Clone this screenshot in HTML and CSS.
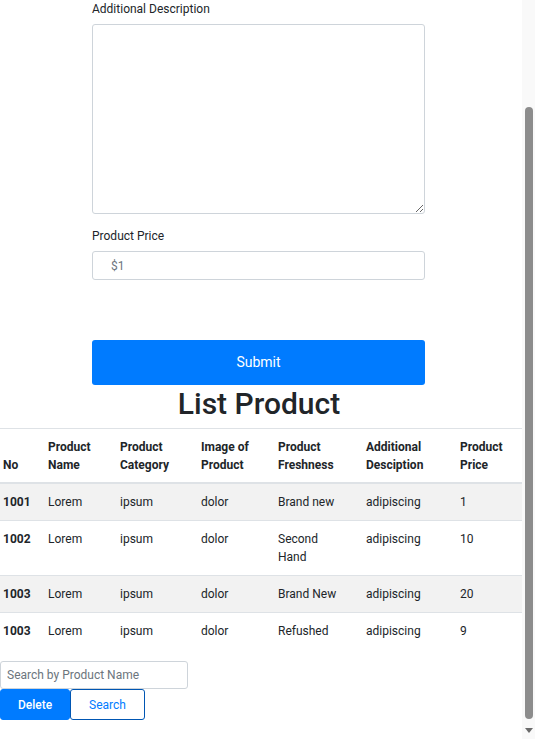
FILE: index.html
```html
<!DOCTYPE html>
<html>
<head>
<meta charset="utf-8">
<link rel="stylesheet" href="styles.css">
</head>
<body>
<div class="layout">
  <main class="page">
    <form class="product-form">
      <label class="field-label">Additional Description</label>
      <textarea class="field-textarea"></textarea>
      <label class="field-label price-label">Product Price</label>
      <input class="field-input" type="text" placeholder="$1">
      <button type="button" class="btn-submit">Submit</button>
    </form>
    <h1 class="list-title">List Product</h1>
    <table class="product-table">
      <colgroup>
        <col class="c1"><col class="c2"><col class="c3"><col class="c4"><col class="c5"><col class="c6"><col class="c7">
      </colgroup>
      <thead>
        <tr>
          <th>No</th>
          <th>Product Name</th>
          <th>Product Category</th>
          <th>Image of Product</th>
          <th>Product Freshness</th>
          <th>Additional Desciption</th>
          <th>Product Price</th>
        </tr>
      </thead>
      <tbody>
        <tr class="striped">
          <td class="num">1001</td><td>Lorem</td><td>ipsum</td><td>dolor</td><td class="fresh">Brand new</td><td>adipiscing</td><td>1</td>
        </tr>
        <tr>
          <td class="num">1002</td><td>Lorem</td><td>ipsum</td><td>dolor</td><td class="fresh">Second Hand</td><td>adipiscing</td><td>10</td>
        </tr>
        <tr class="striped">
          <td class="num">1003</td><td>Lorem</td><td>ipsum</td><td>dolor</td><td class="fresh">Brand New</td><td>adipiscing</td><td>20</td>
        </tr>
        <tr>
          <td class="num">1003</td><td>Lorem</td><td>ipsum</td><td>dolor</td><td class="fresh">Refushed</td><td>adipiscing</td><td>9</td>
        </tr>
      </tbody>
    </table>
    <div class="search-area">
      <input class="search-input" type="text" placeholder="Search by Product Name">
      <div class="search-buttons">
        <button type="button" class="btn-delete">Delete</button>
        <button type="button" class="btn-search">Search</button>
      </div>
    </div>
  </main>
  <div class="scrollbar">
    <div class="thumb"></div>
    <div class="arrow-down"></div>
  </div>
</div>
</body>
</html>
```

FILE: styles.css
```css
* { box-sizing: border-box; }
html, body {
  margin: 0;
  padding: 0;
  height: 739px;
  overflow: hidden;
  background: #fff;
}
body {
  font-family: Roboto, "Liberation Sans", sans-serif;
  color: #212529;
  font-size: 12px;
}
.layout {
  display: flex;
  height: 739px;
}
.page {
  flex: 1;
  min-width: 0;
}
.product-form {
  display: flex;
  flex-direction: column;
  width: 333px;
  margin-left: 92px;
}
.field-label {
  display: block;
  font-size: 12px;
  line-height: 16px;
  padding-top: 1px;
  margin-bottom: 7px;
  color: #212529;
}
.price-label {
  margin-top: 13px;
  margin-bottom: 7px;
}
.field-textarea {
  width: 333px;
  height: 190px;
  border: 1px solid #ced4da;
  border-radius: 3px;
  margin: 0;
  font-family: inherit;
}
.field-input {
  width: 333px;
  height: 29px;
  border: 1px solid #ced4da;
  border-radius: 3px;
  padding: 0 0 0 18px;
  margin: 0;
  font-family: inherit;
  font-size: 12px;
}
.field-input::placeholder,
.search-input::placeholder {
  color: #6c757d;
  opacity: 1;
}
.btn-submit {
  margin-top: 60px;
  height: 45px;
  width: 333px;
  background: #007bff;
  color: #fff;
  border: none;
  border-radius: 3px;
  font-family: inherit;
  font-size: 14px;
  padding: 0 0 2px 0;
}
.list-title {
  margin: 0 0 6px 0;
  padding: 1px 4px 0 0;
  text-align: center;
  font-size: 30px;
  line-height: 36px;
  font-weight: 500;
  color: #212529;
}
.product-table {
  width: 522px;
  border-collapse: collapse;
  table-layout: fixed;
  font-size: 12px;
  border-top: 1px solid #dee2e6;
}
.c1 { width: 45px; }
.c2 { width: 72px; }
.c3 { width: 81px; }
.c4 { width: 77px; }
.c5 { width: 88px; }
.c6 { width: 94px; }
.c7 { width: 65px; }
.product-table th,
.product-table td {
  padding: 9px 3px;
  line-height: 18px;
  text-align: left;
}
.product-table th {
  padding-bottom: 8px;
}
.product-table td.fresh {
  padding-right: 16px;
}
.product-table th {
  font-weight: 700;
  vertical-align: bottom;
  border-bottom: 2px solid #dee2e6;
}
.product-table td {
  vertical-align: top;
  border-bottom: 1px solid #dee2e6;
}
.product-table tbody tr:last-child td {
  border-bottom: none;
}
.product-table .num {
  font-weight: 700;
}
.product-table tr.striped td {
  background: #f2f2f2;
}
.search-area {
  margin-top: 12px;
  display: flex;
  flex-direction: column;
  align-items: flex-start;
}
.search-input {
  width: 188px;
  height: 28px;
  border: 1px solid #ced4da;
  border-radius: 3px;
  padding: 0 0 0 6px;
  margin: 0;
  font-family: inherit;
  font-size: 12px;
}
.search-buttons {
  display: flex;
}
.btn-delete {
  width: 70px;
  height: 31px;
  background: #007bff;
  color: #fff;
  border: 1px solid #007bff;
  border-radius: 3px;
  font-family: inherit;
  font-size: 12px;
  font-weight: 500;
}
.btn-search {
  width: 75px;
  height: 31px;
  background: #fff;
  color: #007bff;
  border: 1px solid #0056b3;
  border-radius: 3px;
  font-family: inherit;
  font-size: 12px;
}
.scrollbar {
  width: 13px;
  height: 739px;
  background: #f9f9f9;
  display: flex;
  flex-direction: column;
  align-items: flex-start;
}
.thumb {
  margin-top: 107px;
  margin-left: 3px;
  width: 8px;
  height: 612px;
  border-radius: 4px;
  background: #8c8c8c;
}
.arrow-down {
  margin-top: 9px;
  margin-left: 3px;
  width: 0;
  height: 0;
  border-left: 4px solid transparent;
  border-right: 4px solid transparent;
  border-top: 5px solid #6b6b6b;
}
```
